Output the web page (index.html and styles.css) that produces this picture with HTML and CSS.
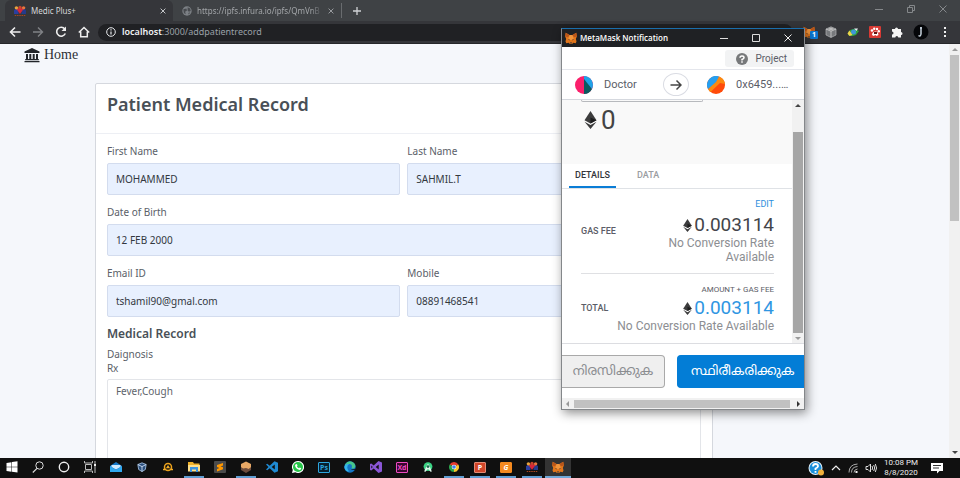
FILE: index.html
```html
<!DOCTYPE html>
<html lang="en">
<head>
<meta charset="utf-8">
<title>Medic Plus+</title>
<link rel="stylesheet" href="styles.css">
</head>
<body>
<svg class="defs" aria-hidden="true">
  <symbol id="fox" viewBox="0 0 16 16">
    <path fill="#e2761b" d="M1 1l5 3h4l5-3 .8 5-1.3 3 .8 3.500-1 2.500-3.300-.8L9.500 16h-3L5 14.200 1.700 15l-1-2.500.8-3.500L.2 6z"/>
    <path fill="#f0953c" d="M6 4h4l1.500 5L8 11 4.500 9z"/>
    <path fill="#b9561a" d="M1 1l5 3-2 3-3.800-1zM15 1l-5 3 2 3 3.800-1z"/>
    <path fill="#233447" d="M4 9.500l2 .5v1.200zM12 9.500l-2 .5v1.200zM6.500 14h3l-.5 1.200H7z"/>
  </symbol>
  <symbol id="eth" viewBox="0 0 12 18">
    <path fill="#3c3c3d" d="M6 0l6 9.200-6 3.300-6-3.300z"/>
    <path fill="#1d1d1e" d="M6 6.500l6 2.700-6 3.300z"/>
    <path fill="#3c3c3d" d="M0 10.800l6 3.300 6-3.300L6 18z"/>
  </symbol>
  <symbol id="people" viewBox="0 0 16 16">
    <path fill="#2b3f9e" d="M0 12V7q3-4 6 0v5z"/><path fill="#253a8c" d="M10 12V7q3-4 6 0v5z"/>
    <path fill="#d8263a" d="M3.500 5.500Q8 2.500 12.500 5.500L8 12z"/>
    <circle cx="3.200" cy="3.800" r="2.300" fill="#e8a33c"/><circle cx="12.800" cy="3.800" r="2.300" fill="#e8743c"/><circle cx="8" cy="3.200" r="2.200" fill="#c9432c"/>
    <path stroke="#a8471f" stroke-width="1.500" stroke-dasharray="2 1" d="M1 14h14"/>
  </symbol>
  <symbol id="cross" viewBox="0 0 10 10"><path fill="none" stroke="currentColor" stroke-width="1.500" d="M1 1l8 8M9 1L1 9"/></symbol>
</svg>

<div class="desktop">
  <header class="tabs">
    <div class="tab active"><svg class="i12"><use href="#people"/></svg><span class="tab-name">Medic Plus+</span><button class="plain" aria-label="Close tab"><svg class="i6"><use href="#cross"/></svg></button></div>
    <div class="tab"><svg class="i10" viewBox="0 0 16 16"><circle cx="8" cy="8" r="7.500" fill="#7c8085"/><path fill="#484b4f" d="M2 5l5-1 1 3-3 2 1 4-3-2zM9 2l4 2 1 4-3 1-2-2zM10 11l3-1-2 4z"/></svg><span class="tab-name">https://ipfs.infura.io/ipfs/QmVnB</span><button class="plain" aria-label="Close tab"><svg class="i6"><use href="#cross"/></svg></button></div>
    <button class="plain new-tab" aria-label="New tab"><svg class="i10" viewBox="0 0 10 10"><path stroke="#d0d2d5" stroke-width="1.300" d="M5 1v8M1 5h8"/></svg></button>
    <div class="win-controls">
      <button class="plain" aria-label="Minimize"><svg class="i8" viewBox="0 0 8 8"><path stroke="#85888b" d="M0 4.500h8"/></svg></button>
      <button class="plain" aria-label="Restore"><svg class="i8" viewBox="0 0 8 8"><path fill="none" stroke="#85888b" d="M.5 2.500h5v5h-5zM2.500 2V.5h5v5H6"/></svg></button>
      <button class="plain" aria-label="Close"><svg class="i8" viewBox="0 0 8 8"><path fill="none" stroke="#85888b" d="M.5.5l7 7M7.500.5l-7 7"/></svg></button>
    </div>
  </header>

  <div class="toolbar">
    <nav class="nav-buttons">
      <button class="plain" aria-label="Back"><svg class="i12" viewBox="0 0 12 12"><path fill="none" stroke="#eee" stroke-width="1.600" d="M11.500 6H2M6 1.500L1.500 6 6 10.500"/></svg></button>
      <button class="plain" aria-label="Forward"><svg class="i12" viewBox="0 0 12 12"><path fill="none" stroke="#808286" stroke-width="1.400" d="M1 6h9.500M6 1.500L10.500 6 6 10.500"/></svg></button>
      <button class="plain" aria-label="Reload"><svg class="i12" viewBox="0 0 12 12"><path fill="none" stroke="#eee" stroke-width="1.600" d="M9.800 3A4.500 4.500 0 1 0 10.300 7.500"/><path fill="#eee" d="M11 .5V5H6.500z"/></svg></button>
      <button class="plain" aria-label="Home page"><svg class="i12" viewBox="0 0 12 12"><path fill="none" stroke="#eee" stroke-width="1.500" d="M.8 6.500L6 1.500l5.200 5M2.700 5.500v5.300h6.600V5.500"/></svg></button>
    </nav>
    <div class="address">
      <svg class="i10" viewBox="0 0 10 10"><circle cx="5" cy="5" r="4.300" fill="none" stroke="#e8eaed"/><path stroke="#e8eaed" stroke-width="1.200" d="M5 4.500v3M5 2.300v1.200"/></svg>
      <span class="url"><b>localhost</b>:3000/addpatientrecord</span>
    </div>
    <div class="extensions">
      <span class="ext-fox"><svg class="i12"><use href="#fox"/></svg><span class="badge">1</span></span>
      <svg class="i12" viewBox="0 0 12 12"><path fill="#77797c" stroke="#b4b6b8" stroke-width=".7" d="M6 .8l5 2.200v6L6 11.500 1 9V3z"/><path fill="#bbb" d="M6 1.500L9.500 3 6 4.500 2.500 3z"/><path fill="none" stroke="#d0d0d0" stroke-width=".8" d="M1 3l5 2.300L11 3M6 5.300v6"/></svg>
      <svg class="i12" viewBox="0 0 12 12"><path fill="#31a53c" d="M1 7q1-4 7-4l4 2-3 4q-5 2-8 0z"/><circle cx="6.500" cy="6" r="2.500" fill="#4196d8"/><path fill="#efd44b" d="M.5 7.500l2-3 1 1.500 2 3-3 1z"/><path fill="#e6edf1" d="M7 2.500h4L9.500 5z"/></svg>
      <svg class="i12" viewBox="0 0 12 12"><rect width="12" height="12" rx="1" fill="#d83a34"/><circle cx="3" cy="4.500" r="1.300" fill="#fff"/><circle cx="5.200" cy="2.800" r="1.200" fill="#fff"/><circle cx="8" cy="3" r="1.200" fill="#fff"/><circle cx="9.800" cy="5.200" r="1.200" fill="#fff"/><path fill="#fff" d="M3 9q0-3 3-3.500t3.500 3.500l-2 1-1-1-2 1z"/><path fill="#611713" d="M5 6h3v2H5z"/></svg>
      <svg class="i12" viewBox="0 0 12 12"><path fill="#f4f4f4" d="M1 3h3a1.500 1.500 0 1 1 3 0h3v3a1.500 1.500 0 1 1 0 3v2.500H7.300a1.500 1.500 0 0 0-3 0H1V8.500a1.500 1.500 0 0 0 0-3z"/></svg>
      <svg class="i16" viewBox="0 0 16 16"><circle cx="8" cy="8" r="7.500" fill="#050609"/><path fill="none" stroke="#c6d2dc" stroke-width="1.500" d="M8 3v7q-.5 3-2.500 1.500M7 4h2"/></svg>
      <button class="plain" aria-label="Menu"><svg class="i12" viewBox="0 0 12 12"><path fill="#f1f1f1" d="M5 1h2v2H5zM5 5h2v2H5zM5 9h2v2H5z"/></svg></button>
    </div>
  </div>

  <div class="viewport">
    <main class="page">
      <nav class="site-nav"><a href="#"><svg class="i16" viewBox="0 0 16 16"><path fill="#222529" d="M8 1l7.500 3.500V6H.5V4.500zM2 7h2v5h1.300V7h2v5h1.400V7h2v5H12V7h2v5h.8v1.300H1.200V12H2zM.5 14h15v1.300H.5z"/></svg>Home</a></nav>
      <section class="card">
        <h1>Patient Medical Record</h1>
        <form class="form">
          <label>First Name<input type="text" value="MOHAMMED"></label>
          <label>Last Name<input type="text" value="SAHMIL.T"></label>
          <label class="wide">Date of Birth<input type="text" value="12 FEB 2000"></label>
          <label>Email ID<input type="email" value="tshamil90@gmal.com"></label>
          <label>Mobile<input type="tel" value="08891468541"></label>
          <div class="wide record">
            <h2>Medical Record</h2>
            <p>Daignosis</p>
            <label>Rx<textarea>Fever,Cough</textarea></label>
          </div>
        </form>
      </section>
    </main>
    <div class="scroll-v page-scroll" aria-hidden="true"><i class="arrow up"></i><i class="thumb"></i><i class="arrow down dark"></i></div>
  </div>

  <footer class="taskbar">
    <div class="apps">
      <button class="plain app" aria-label="Start"><svg class="i12" viewBox="0 0 12 12"><path fill="#fff" d="M.5 2L5.500 1.200v4.500h-5zM6 1.100L11.500.3v5.400H6zM.5 6.200h5v4.500l-5-.8zM6 6.200h5.500v5.400L6 10.800z"/></svg></button>
      <button class="plain app" aria-label="Search"><svg class="i12" viewBox="0 0 12 12"><circle cx="7.500" cy="4.500" r="3.700" fill="none" stroke="#ddd"/><path stroke="#ddd" stroke-width="1.200" d="M5 7.300L.8 11.500"/></svg></button>
      <button class="plain app" aria-label="Cortana"><svg class="i12" viewBox="0 0 12 12"><circle cx="6" cy="6" r="4.700" fill="none" stroke="#eee" stroke-width="1.400"/></svg></button>
      <button class="plain app" aria-label="Task view"><svg class="i12" viewBox="0 0 12 12"><path fill="none" stroke="#bbb" d="M1.500 3.500h6v5h-6zM.5 0v2h8V0M.5 12v-2h8v2M11 0v3M11 5v7"/><path fill="#eee" d="M10 3h2v2h-2z"/></svg></button>
      <button class="plain app" aria-label="Mail"><svg class="i12" viewBox="0 0 12 12"><path fill="#1679c9" d="M0 5l6-4 6 4v6H0z"/><path fill="#cfeaff" d="M1.500 4h9v2L6 8.500 1.500 6z"/><path fill="#30a8ef" d="M0 5l6 4 6-4v6H0z"/></svg></button>
      <button class="plain app" aria-label="VirtualBox"><svg class="i10" viewBox="0 0 12 12"><path fill="#2b4f7d" stroke="#a9c6e6" d="M6 1l5 2-1 6-4 2.500L2 9 1 3z"/><path stroke="#dcecff" fill="none" d="M1 3l5 2.500L11 3M6 5.500v6"/></svg></button>
      <button class="plain app" aria-label="Rounds"><svg class="i10" viewBox="0 0 12 12"><circle cx="6" cy="6" r="4.200" fill="none" stroke="#eea31c" stroke-width="1.800"/><path fill="#f3ae27" d="M6 3.500l2.500 4h-5zM0 8h3v2H0zM9 8h3v2H9z"/></svg></button>
      <button class="plain app open" aria-label="File Explorer"><svg class="i12" viewBox="0 0 12 12"><path fill="#eeb12b" d="M0 1h5l1 1.500h5.500V10H0z"/><path fill="#ffe08a" d="M0 4h12v6.500H0z"/><path fill="#3d94df" d="M2 6h8v5H8V8.500H4V11H2z"/></svg></button>
      <button class="plain app" aria-label="Sublime Text"><svg class="i12" viewBox="0 0 12 12"><rect width="12" height="12" rx="1" fill="#4b4b4b"/><path fill="#ff9800" d="M3 4l6-2v2.500L6.500 5.400 9 6.300v2L3 10.500V8l2.500-1L3 6z"/></svg></button>
      <button class="plain app open" aria-label="Ganache"><svg class="i12" viewBox="0 0 12 12"><path fill="#e7a866" d="M6 .5l5 2.500v4L6 9.500 1 7V3z"/><path fill="#6d4c3c" d="M1 6l2 1.500L6 7l3 1 2-2v3l-5 3-5-3z"/></svg></button>
      <button class="plain app" aria-label="VS Code"><svg class="i12" viewBox="0 0 12 12"><path fill="#1f8ad2" d="M8.500.3L12 1.700v8.600l-3.500 1.400L3.700 7.300 1.200 9.200 0 8.500 2.500 6 0 3.500l1.200-.7 2.500 1.900zM8.800 3.600L5.700 6l3.100 2.400z"/></svg></button>
      <button class="plain app" aria-label="WhatsApp"><svg class="i12" viewBox="0 0 12 12"><path fill="#fff" d="M6 0a6 6 0 1 1-2.700 11.300L0 12l.8-3A6 6 0 0 1 6 0z"/><circle cx="6" cy="6" r="5" fill="#27c64a"/><path fill="#fff" d="M4 3l1 .2.500 1.500-.6.700Q5.500 6.700 7 7.200l.8-.7 1.400.8q0 1.700-1.700 1.700Q3.500 8 3 4.300z"/></svg></button>
      <button class="plain app" aria-label="Photoshop"><span class="tile ps">Ps</span></button>
      <button class="plain app" aria-label="Edge"><svg class="i12" viewBox="0 0 12 12"><circle cx="6" cy="6" r="5.700" fill="#1476c6"/><path fill="#47c78a" d="M1 3.500Q5-2 10 2q3 4-.5 5.500H7.500Q9 3 5 3 3 3 1 5z"/><path fill="#35b5ea" d="M.3 6Q1 2.500 5 3 1.500 6 5 10.500 1 10.500.3 6z"/><path fill="#111" d="M6.500 7.500q2 1.700 5 0l-.5 1.300q-3 1-4.500-1.300z"/></svg></button>
      <button class="plain app" aria-label="Visual Studio"><svg class="i12" viewBox="0 0 12 12"><path fill="#8a56d6" d="M8.500 0L12 1.500v9L8.500 12 3.700 7.600 1.300 9.500 0 8.900V3.100l1.300-.6 2.400 1.900zM8.700 3.500L5.700 6l3 2.500zM1.300 4.500v3L2.800 6z"/></svg></button>
      <button class="plain app" aria-label="Adobe XD"><span class="tile xd">Xd</span></button>
      <button class="plain app" aria-label="Android Studio"><svg class="i10" viewBox="0 0 12 12"><circle cx="6" cy="5.500" r="5.300" fill="#3bd484"/><path fill="#dff7ec" d="M6 2l2 3 2.500 6-1 1L6 8.500 2.500 12l-1-1L4 5z"/><circle cx="6" cy="5.500" r="1.700" fill="#1b6a4d"/></svg></button>
      <button class="plain app open" aria-label="Chrome"><svg class="i10" viewBox="0 0 12 12"><path fill="#e33b2e" d="M6 6L.8 3a6 6 0 0 1 10.400 0z"/><path fill="#f9c62c" d="M6 6h0l5.200-3A6 6 0 0 1 6 12z"/><path fill="#2ba24c" d="M6 6v6A6 6 0 0 1 .8 3z"/><circle cx="6" cy="6" r="2.800" fill="#fff"/><circle cx="6" cy="6" r="2.200" fill="#3f82ee"/></svg></button>
      <button class="plain app open" aria-label="PowerPoint"><span class="tile pp">P</span></button>
      <button class="plain app open" aria-label="Foxit"><span class="tile gg">G</span></button>
      <button class="plain app open" aria-label="Medic Plus+"><svg class="i12"><use href="#people"/></svg></button>
      <button class="plain app open current" aria-label="MetaMask"><svg class="i12"><use href="#fox"/></svg></button>
    </div>
    <div class="tray">
      <svg class="i16" viewBox="0 0 16 16"><circle cx="7.500" cy="8" r="7" fill="#e8f5fd"/><circle cx="7.500" cy="8" r="6" fill="#1a8fdb"/><path fill="none" stroke="#fff" stroke-width="1.800" d="M5 6.500q0-2.500 2.500-2.500T10 6.300Q9.800 7.500 7.500 8.500V10M7.500 11v1.800"/><circle cx="13" cy="12.500" r="3" fill="#f3b13c"/></svg>
      <svg class="i10" viewBox="0 0 10 10"><path fill="none" stroke="#eee" stroke-width="1.200" d="M1 7l4-4 4 4"/></svg>
      <svg class="i10" viewBox="0 0 10 10"><path fill="none" stroke="#aaa" d="M1 9.500Q1 1.500 9.500 1M3.500 9.500Q3.500 4 9.500 3.500M6 9.500Q6 6.500 9.500 6"/><path fill="#eee" d="M7.500 8h2v2h-2z"/></svg>
      <svg class="i12" viewBox="0 0 12 12"><path fill="none" stroke="#ddd" d="M1 4.500h2L5.500 2v8L3 7.500H1zM7 4q1.300 2 0 4M8.700 3q2 3 0 6M10.300 2q2.500 4 0 8"/></svg>
      <div class="clock"><time>10:08 PM</time><time>8/8/2020</time></div>
      <svg class="i12" viewBox="0 0 12 12"><path fill="#fff" d="M0 1h12v8H8.500L6 11.500V9H0z"/><path stroke="#333" d="M2 3.500h8M2 6h6"/></svg>
    </div>
  </footer>

  <section class="popup" aria-label="MetaMask Notification">
    <header class="popup-title">
      <svg class="i12"><use href="#fox"/></svg><span>MetaMask Notification</span>
      <div class="popup-controls">
        <button class="plain" aria-label="Minimize"><svg class="i8" viewBox="0 0 8 8"><path stroke="#ddd" d="M0 4.500h8"/></svg></button>
        <button class="plain" aria-label="Maximize"><svg class="i8" viewBox="0 0 8 8"><path fill="none" stroke="#ddd" d="M.5.5h7v7h-7z"/></svg></button>
        <button class="plain" aria-label="Close"><svg class="i8" viewBox="0 0 8 8"><path fill="none" stroke="#eee" d="M.5.5l7 7M7.500.5l-7 7"/></svg></button>
      </div>
    </header>
    <div class="network"><button class="plain pill"><svg class="i12" viewBox="0 0 12 12"><circle cx="6" cy="6" r="6" fill="#77797b"/><path fill="none" stroke="#fff" stroke-width="1.500" d="M4 4.800Q4 3 6 3t2 1.700Q8 5.500 6 6.500v1M6 8.300v1.400"/></svg>Project</button></div>
    <div class="parties">
      <div class="party"><svg class="i18" viewBox="0 0 18 18"><circle cx="9" cy="9" r="9" fill="#fb1f6b"/><path fill="#0c5a60" d="M9 1v17a9 9 0 0 0 8-5z"/><path fill="#1fa3e8" d="M9 0a9 9 0 0 1 8 13L9 3z"/></svg>Doctor</div>
      <div class="arrow-circle"><svg class="i12" viewBox="0 0 12 12"><path fill="none" stroke="#444" stroke-width="1.500" d="M.5 6h10.500M6.500 1.500L11 6l-4.500 4.500"/></svg></div>
      <div class="party to"><svg class="i18" viewBox="0 0 18 18"><circle cx="9" cy="9" r="9" fill="#ff4b0a"/><path fill="#fb8a10" d="M12 .5A9 9 0 0 1 18 8L13 7 3.500 16A9 9 0 0 1 1 13z"/><path fill="#259ff0" d="M1 13A9 9 0 0 1 12 .5L9 6z"/></svg>0x6459...…</div>
    </div>
    <div class="popup-body">
      <div class="popup-content">
        <div class="summary"><div class="field-edge"></div><div class="amount"><svg class="eth-l"><use href="#eth"/></svg>0</div></div>
        <div class="popup-tabs"><button class="plain ptab selected">DETAILS</button><button class="plain ptab">DATA</button></div>
        <div class="fees">
          <button class="plain edit">EDIT</button>
          <div class="fee gas"><span class="fee-label">GAS FEE</span><div class="fee-value"><div class="number"><svg class="eth-s"><use href="#eth"/></svg>0.003114</div><p>No Conversion Rate Available</p></div></div>
          <div class="sum-label">AMOUNT + GAS FEE</div>
          <div class="fee"><span class="fee-label">TOTAL</span><div class="number blue"><svg class="eth-s"><use href="#eth"/></svg>0.003114</div></div>
          <p>No Conversion Rate Available</p>
        </div>
      </div>
      <div class="scroll-v popup-scroll" aria-hidden="true"><i class="arrow up dark"></i><i class="thumb"></i><i class="arrow down"></i></div>
    </div>
    <div class="actions" lang="ml"><button class="btn reject">നിരസിക്കുക</button><button class="btn confirm">സ്ഥിരീകരിക്കുക</button></div>
    <div class="scroll-h" aria-hidden="true"><i class="arrow left"></i><i class="thumb"></i><i class="arrow right dark"></i></div>
  </section>
</div>
</body>
</html>
```
FILE: styles.css
```css
* { box-sizing: border-box; }
body { margin: 0; font: 10px/14px "Noto Sans", "Open Sans", sans-serif; color: #5a6068; }
h1, h2, p { margin: 0; }
svg { display: block; flex: none; }
.defs { position: absolute; width: 0; height: 0; }
.plain { display: flex; align-items: center; justify-content: center; padding: 0; border: 0; background: none; color: inherit; font: inherit; }
.i6 { width: 6px; height: 6px; }
.i8 { width: 8px; height: 8px; }
.i10 { width: 10px; height: 10px; }
.i12 { width: 12px; height: 12px; }
.i16 { width: 16px; height: 16px; }
.i18 { width: 18px; height: 18px; }

.desktop { position: relative; display: flex; flex-direction: column; height: 100vh; overflow: hidden; }

/* Browser chrome */
.tabs { display: flex; height: 21px; padding-left: 5px; background: #3f4245; color: #c9cbce; font-size: 8px; }
.tab { display: flex; align-items: center; gap: 5px; width: 168px; padding: 0 7px 0 9px; color: #a3a6a9; }
.tab.active { background: #35363a; border-radius: 6px 6px 0 0; color: #d5d7d9; }
.tab-name { flex: 1; white-space: nowrap; }
.tab:not(.active) .tab-name { -webkit-mask-image: linear-gradient(90deg, #000 90%, transparent); mask-image: linear-gradient(90deg, #000 90%, transparent); }
.new-tab { width: 31px; height: 15px; margin-top: 3px; border-left: 1px solid #696c6f; }
.win-controls { display: flex; gap: 24px; margin-left: auto; padding: 0 13px 3px 0; }
.toolbar { display: flex; align-items: center; height: 23px; padding: 0 9px; background: #35363a; border-bottom: 1px solid #26272a; }
.nav-buttons { display: flex; gap: 11px; padding-right: 8px; }
.address { display: flex; align-items: center; gap: 6px; flex: 1; height: 17px; padding: 0 8px; border-radius: 9px; background: #202124; color: #9aa0a6; font-size: 9px; }
.address b { color: #f1f3f4; font-weight: 600; }
.extensions { display: flex; align-items: center; gap: 10px; padding-left: 10px; }
.ext-fox { position: relative; }
.badge { position: absolute; left: 7px; top: 5px; width: 8px; height: 8px; border-radius: 1px; background: #0b78d4; color: #fff; font: bold 7px/8px "Open Sans", sans-serif; text-align: center; }

/* Scrollbars */
.scroll-v { display: flex; flex-direction: column; align-items: center; flex: none; background: #f1f1f1; }
.scroll-h { display: flex; align-items: center; height: 11px; background: #f1f1f1; }
.thumb { background: #c1c1c1; }
.arrow { width: 0; height: 0; border: 3px solid transparent; flex: none; }
.arrow.up { border-top: 0; border-bottom-color: #9a9a9a; }
.arrow.down { border-bottom: 0; border-top-color: #9a9a9a; margin-top: auto; }
.arrow.left { border-left: 0; border-right-color: #9a9a9a; }
.arrow.right { border-right: 0; border-left-color: #9a9a9a; }
.arrow.up.dark { border-bottom-color: #444; }
.arrow.down.dark { border-top-color: #444; }
.arrow.right.dark { border-left-color: #333; }

/* Page */
.viewport { display: flex; flex: 1; min-height: 0; }
.page { flex: 1; overflow: hidden; background: #f5f7fb; }
.page-scroll { width: 11px; padding: 4px 0; }
.page-scroll .thumb { width: 9px; height: 41%; margin-top: 4px; }
.site-nav { height: 39px; padding: 2px 24px; }
.site-nav a { display: inline-flex; align-items: center; gap: 4px; color: #2c3036; font: 14px/18px "Liberation Serif", serif; text-decoration: none; }
.card { width: 65.1%; margin-left: 10%; background: #fff; border: 1px solid #d5d8de; border-radius: 2px; }
h1 { padding: 8px 11px 17px; border-bottom: 1px solid #edeff4; font-size: 18px; line-height: 24px; font-weight: 600; color: #495057; }
.form { display: grid; grid-template-columns: 1fr 1fr; gap: 10px 7px; padding: 10px 11px; }
.wide { grid-column: 1 / -1; }
label { display: block; line-height: 15px; }
input, textarea { display: block; width: 100%; border: 1px solid #d3dcee; border-radius: 2px; background: #e8f0fe; color: #33383e; font: inherit; padding: 0 8px; }
input { height: 32px; margin-top: 4px; }
.record { margin-top: -2px; }
h2 { margin-bottom: 4px; font-size: 12px; line-height: 18px; font-weight: 600; color: #495057; }
textarea { height: 140px; margin-top: 3px; padding: 4px 8px; border-color: #e3e5e9; background: #fff; color: #5d646b; resize: none; }

/* Taskbar */
.taskbar { display: flex; justify-content: space-between; flex: none; height: 20px; background: #101010; color: #eee; }
.apps { display: flex; margin-left: -1px; }
.app { width: 26px; height: 20px; border-bottom: 2px solid transparent; }
.open { background: linear-gradient(#5f9dd2, #5f9dd2) 3px 100% / 20px 2px no-repeat; background-origin: border-box; background-clip: border-box; }
.current { background: #333; border-bottom-color: #70a8d8; }
.tile { display: block; width: 12px; height: 11px; border: 1px solid; border-radius: 1px; font: bold 7px/9px "Open Sans", sans-serif; text-align: center; }
.ps { background: #06202f; color: #2da5dd; }
.xd { background: #3b0730; color: #ee4bc0; }
.pp { background: #d14629; color: #fff; border-color: #e38b75; }
.gg { background: #f58a1f; color: #fff; border-color: #f58a1f; font-style: italic; }
.tray { display: flex; align-items: center; gap: 7px; padding-right: 17px; }
.clock { display: flex; flex-direction: column; align-items: center; margin-right: 6px; font: 8px/10px Roboto, sans-serif; }

/* MetaMask window */
.popup { position: absolute; left: 561px; top: 28px; width: 244px; overflow: hidden; background: #fff; border: 1px solid #84878a; border-top-color: #1a6eac; box-shadow: 2px 3px 10px rgba(0, 0, 0, .45); color: #5b5d67; font-family: Roboto, sans-serif; }
.popup-title { display: flex; align-items: center; gap: 3px; height: 18px; padding: 0 12px 0 3px; background: #1f2124; color: #fff; font: 600 8px/12px "Open Sans", sans-serif; white-space: nowrap; }
.popup-controls { display: flex; gap: 24px; margin-left: auto; }
.network { display: flex; justify-content: flex-end; padding: 3px 10px 2px; border-bottom: 1px solid #e4e6ec; }
.pill { gap: 7px; height: 17px; padding: 0 7px 0 11px; border-radius: 3px; background: #f2f3f4; }
.parties { display: flex; align-items: center; height: 30px; padding: 0 0 0 13px; border-bottom: 1px solid #d5d8de; }
.party { display: flex; align-items: center; gap: 11px; flex: 0 0 88px; font-size: 11px; white-space: nowrap; }
.party.to { flex: 1; margin-left: 18px; }
.arrow-circle { display: grid; place-items: center; flex: none; width: 26px; height: 23px; border: 1px solid #dadce3; border-radius: 50%; }
.popup-body { display: flex; }
.popup-content { flex: 1; }
.popup-scroll { width: 12px; padding: 4px 0 3px; }
.popup-scroll .thumb { flex: 1; width: 10px; margin: 25px 0 4px; background: #a6a6a6; }
.summary { height: 64px; padding-left: 19px; background: #f9f9f9; }
.field-edge { width: 122px; height: 2px; border: 1px solid #b7b9bd; border-top: 0; border-radius: 0 0 2px 2px; }
.amount { display: flex; align-items: center; gap: 4px; height: 36px; padding-left: 3px; font-size: 26px; color: #444; }
.eth-l { width: 13px; height: 18px; }
.eth-s { width: 9px; height: 13px; }
.popup-tabs { display: flex; padding-left: 7px; border-bottom: 1px solid #dfe2e6; }
.ptab { height: 24px; padding: 0 6px; margin-right: 15px; border-bottom: 2px solid transparent; color: #9b9da1; font-size: 9px; font-weight: 500; }
.selected { border-color: #0a7dd6; color: #33353a; }
.fees { padding: 8px 18px 10px 19px; }
.fees p { font-size: 12px; line-height: 14px; color: #8c8e92; text-align: right; }
.edit { margin-left: auto; color: #2f8fdd; font-size: 9px; }
.fee { display: flex; align-items: center; justify-content: space-between; }
.gas { align-items: flex-start; margin-top: 3px; padding-bottom: 9px; border-bottom: 1px solid #dfe0e3; }
.gas .fee-label { padding-top: 10px; }
.fee-label { font-size: 9px; font-weight: 500; }
.fee-value { width: 115px; }
.number { display: flex; align-items: center; justify-content: flex-end; gap: 2px; font-size: 19px; line-height: 22px; color: #43454a; }
.blue { color: #2f96e2; }
.sum-label { margin-top: 9px; font-size: 8px; text-align: right; }
.actions { display: flex; justify-content: space-between; height: 55px; padding: 11px 0; border-top: 1px solid #dcdde1; overflow: hidden; }
.btn { height: 33px; padding: 0 13px; border: 1px solid #a9a9a9; border-radius: 4px; background: #efefef; color: #8b8d91; font: 13px/20px "Noto Sans Malayalam", Roboto, sans-serif; white-space: nowrap; }
.reject { width: 103px; padding: 0 8px; border-left: 0; border-radius: 0 4px 4px 0; }
.confirm { width: 127px; border-color: #037dd6; border-right: 0; border-radius: 4px 0 0 4px; background: #037dd6; color: #fff; }
.scroll-h { padding: 0 4px; }
.scroll-h .thumb { flex: 1; height: 8px; margin: 0 7px 0 5px; }
```
